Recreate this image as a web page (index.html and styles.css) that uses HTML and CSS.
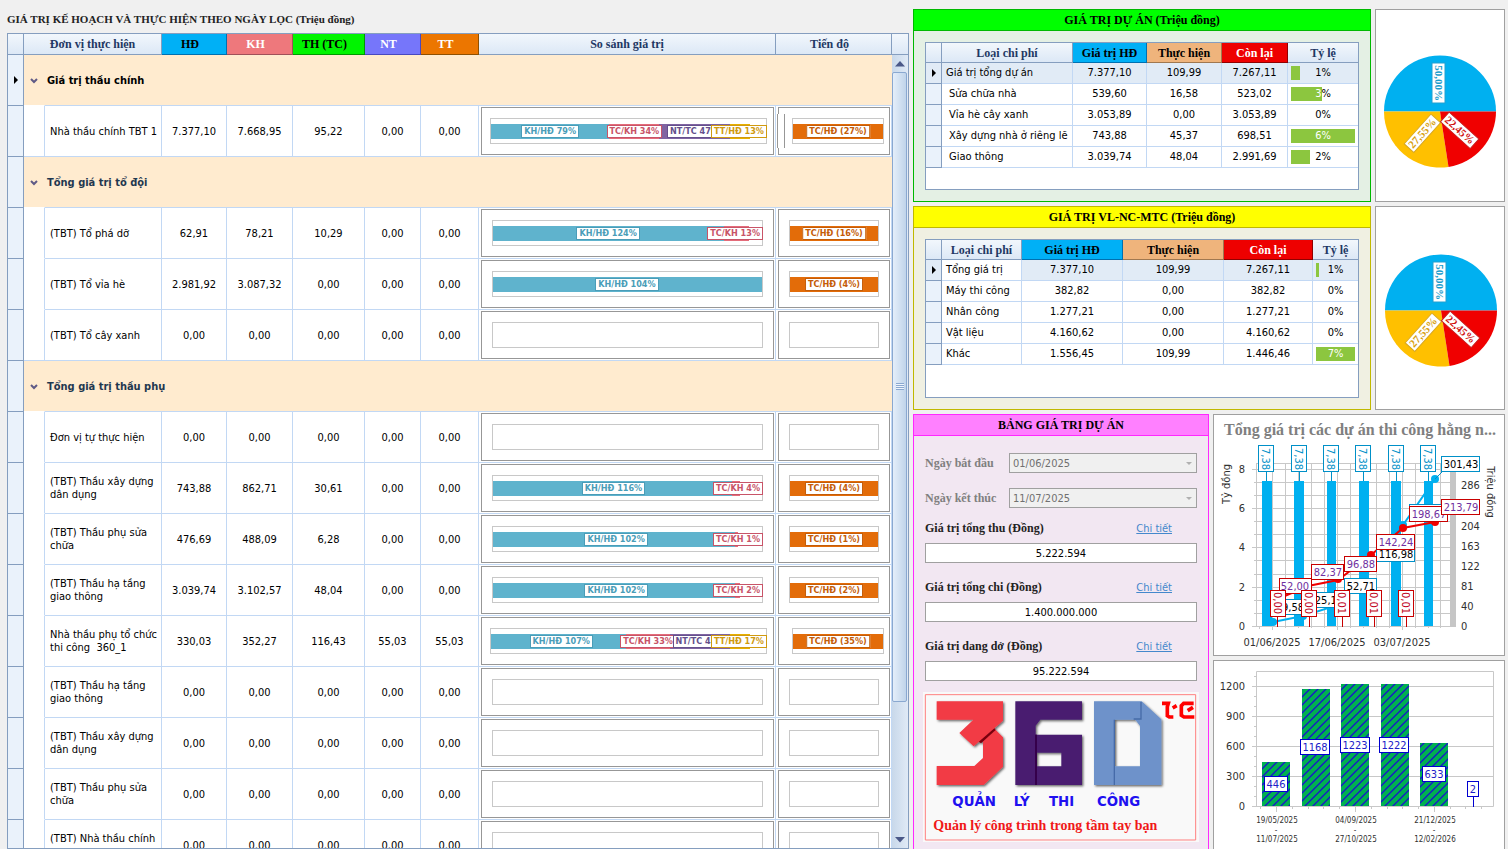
FILE: index.html
```
<!DOCTYPE html>
<html lang="vi">
<head>
  <meta charset="UTF-8">
  <meta name="viewport" content="width=device-width, initial-scale=1.0">
  <title>360 TC - Quản lý thi công</title>
  <link rel="stylesheet" href="styles.css">
</head>
<body>

  <div class="dashboard">

    <!-- Plan and actual values -->
    <section class="plan">
      <h1 class="plan-title">GIÁ TRỊ KẾ HOẠCH VÀ THỰC HIỆN THEO NGÀY LỌC (Triệu đồng)</h1>
      <div class="plan-grid">
        <div class="plan-scroll">
          <table class="plan-table">
            <colgroup>
              <col class="col-mark"><col class="col-indent"><col class="col-name"><col class="col-hd"><col class="col-kh"><col class="col-th"><col class="col-nt"><col class="col-tt"><col><col class="col-progress">
            </colgroup>
            <thead>
              <tr>
                <th></th>
                <th colspan="2">Đơn vị thực hiện</th>
                <th class="money blue">HĐ</th>
                <th class="money pink">KH</th>
                <th class="money green">TH (TC)</th>
                <th class="money violet">NT</th>
                <th class="money orange">TT</th>
                <th>So sánh giá trị</th>
                <th class="progress-head">Tiến độ</th>
              </tr>
            </thead>
            <tbody>
              <tr class="group current">
                <td class="mark"><span class="pointer"></span></td>
                <td colspan="9"><button type="button" class="toggle" aria-label="Thu gọn"><svg width="8" height="6" viewBox="0 0 8 6"><path d="M1 1l3 3 3-3"/></svg></button>Giá trị thầu chính</td>
              </tr>
              <tr class="wide seam">
                <td class="mark"></td><td class="indent"></td>
                <td class="name">Nhà thầu chính TBT 1</td>
                <td>7.377,10</td><td>7.668,95</td><td>95,22</td><td>0,00</td><td>0,00</td>
                <td class="chart"><div class="frame"><div class="track">
                  <span class="seg kh" style="width: 43%"></span><span class="seg tc" style="width: 18%"></span><span class="seg nt" style="width: 26%"></span><span class="seg tt" style="width: 7%"></span>
                  <span class="tag kh" style="left: 11%">KH/HĐ 79%</span><span class="tag tc" style="left: 42%">TC/KH 34%</span><span class="tag nt" style="left: 64%">NT/TC 47%</span><span class="tag tt end">TT/HĐ 13%</span>
                </div></div></td>
                <td class="chart"><div class="frame"><div class="track"><span class="seg done"></span><span class="tag done">TC/HĐ (27%)</span></div></div></td>
              </tr>
              <tr class="group">
                <td class="mark"></td>
                <td colspan="9"><button type="button" class="toggle" aria-label="Thu gọn"><svg width="8" height="6" viewBox="0 0 8 6"><path d="M1 1l3 3 3-3"/></svg></button>Tổng giá trị tổ đội</td>
              </tr>
              <tr>
                <td class="mark"></td><td class="indent"></td>
                <td class="name">(TBT) Tổ phá dỡ</td>
                <td>62,91</td><td>78,21</td><td>10,29</td><td>0,00</td><td>0,00</td>
                <td class="chart"><div class="frame"><div class="track">
                  <span class="seg kh" style="width: 86%"></span><span class="seg tc" style="width: 9%"></span>
                  <span class="tag kh" style="left: 31%">KH/HĐ 124%</span><span class="tag tc end">TC/KH 13%</span>
                </div></div></td>
                <td class="chart"><div class="frame"><div class="track"><span class="seg done"></span><span class="tag done">TC/HĐ (16%)</span></div></div></td>
              </tr>
              <tr>
                <td class="mark"></td><td class="indent"></td>
                <td class="name">(TBT) Tổ vỉa hè</td>
                <td>2.981,92</td><td>3.087,32</td><td>0,00</td><td>0,00</td><td>0,00</td>
                <td class="chart"><div class="frame"><div class="track">
                  <span class="seg kh" style="width: 100%"></span>
                  <span class="tag kh" style="left: 38%">KH/HĐ 104%</span>
                </div></div></td>
                <td class="chart"><div class="frame"><div class="track"><span class="seg done"></span><span class="tag done">TC/HĐ (4%)</span></div></div></td>
              </tr>
              <tr>
                <td class="mark"></td><td class="indent"></td>
                <td class="name">(TBT) Tổ cây xanh</td>
                <td>0,00</td><td>0,00</td><td>0,00</td><td>0,00</td><td>0,00</td>
                <td class="chart"><div class="frame"><div class="track"></div></div></td>
                <td class="chart"><div class="frame"><div class="track"></div></div></td>
              </tr>
              <tr class="group">
                <td class="mark"></td>
                <td colspan="9"><button type="button" class="toggle" aria-label="Thu gọn"><svg width="8" height="6" viewBox="0 0 8 6"><path d="M1 1l3 3 3-3"/></svg></button>Tổng giá trị thầu phụ</td>
              </tr>
              <tr>
                <td class="mark"></td><td class="indent"></td>
                <td class="name">Đơn vị tự thực hiện</td>
                <td>0,00</td><td>0,00</td><td>0,00</td><td>0,00</td><td>0,00</td>
                <td class="chart"><div class="frame"><div class="track"></div></div></td>
                <td class="chart"><div class="frame"><div class="track"></div></div></td>
              </tr>
              <tr>
                <td class="mark"></td><td class="indent"></td>
                <td class="name">(TBT) Thầu xây dựng<br>dân dụng</td>
                <td>743,88</td><td>862,71</td><td>30,61</td><td>0,00</td><td>0,00</td>
                <td class="chart"><div class="frame"><div class="track">
                  <span class="seg kh" style="width: 89%"></span><span class="seg tc" style="width: 3%"></span>
                  <span class="tag kh" style="left: 33%">KH/HĐ 116%</span><span class="tag tc end">TC/KH 4%</span>
                </div></div></td>
                <td class="chart"><div class="frame"><div class="track"><span class="seg done"></span><span class="tag done">TC/HĐ (4%)</span></div></div></td>
              </tr>
              <tr>
                <td class="mark"></td><td class="indent"></td>
                <td class="name">(TBT) Thầu phụ sửa<br>chữa</td>
                <td>476,69</td><td>488,09</td><td>6,28</td><td>0,00</td><td>0,00</td>
                <td class="chart"><div class="frame"><div class="track">
                  <span class="seg kh" style="width: 90%"></span><span class="seg tc" style="width: 1%"></span>
                  <span class="tag kh" style="left: 34%">KH/HĐ 102%</span><span class="tag tc end">TC/KH 1%</span>
                </div></div></td>
                <td class="chart"><div class="frame"><div class="track"><span class="seg done"></span><span class="tag done">TC/HĐ (1%)</span></div></div></td>
              </tr>
              <tr>
                <td class="mark"></td><td class="indent"></td>
                <td class="name">(TBT) Thầu hạ tầng<br>giao thông</td>
                <td>3.039,74</td><td>3.102,57</td><td>48,04</td><td>0,00</td><td>0,00</td>
                <td class="chart"><div class="frame"><div class="track">
                  <span class="seg kh" style="width: 90%"></span><span class="seg tc" style="width: 2%"></span>
                  <span class="tag kh" style="left: 34%">KH/HĐ 102%</span><span class="tag tc end">TC/KH 2%</span>
                </div></div></td>
                <td class="chart"><div class="frame"><div class="track"><span class="seg done"></span><span class="tag done">TC/HĐ (2%)</span></div></div></td>
              </tr>
              <tr class="wide">
                <td class="mark"></td><td class="indent"></td>
                <td class="name">Nhà thầu phụ tổ chức<br>thi công&nbsp; 360_1</td>
                <td>330,03</td><td>352,27</td><td>116,43</td><td>55,03</td><td>55,03</td>
                <td class="chart"><div class="frame"><div class="track">
                  <span class="seg kh" style="width: 49%"></span><span class="seg tc" style="width: 16%"></span><span class="seg nt" style="width: 22%"></span><span class="seg tt" style="width: 7%"></span>
                  <span class="tag kh" style="left: 14%">KH/HĐ 107%</span><span class="tag tc" style="left: 47%">TC/KH 33%</span><span class="tag nt" style="left: 66%">NT/TC 47%</span><span class="tag tt end">TT/HĐ 17%</span>
                </div></div></td>
                <td class="chart"><div class="frame"><div class="track"><span class="seg done"></span><span class="tag done">TC/HĐ (35%)</span></div></div></td>
              </tr>
              <tr>
                <td class="mark"></td><td class="indent"></td>
                <td class="name">(TBT) Thầu hạ tầng<br>giao thông</td>
                <td>0,00</td><td>0,00</td><td>0,00</td><td>0,00</td><td>0,00</td>
                <td class="chart"><div class="frame"><div class="track"></div></div></td>
                <td class="chart"><div class="frame"><div class="track"></div></div></td>
              </tr>
              <tr>
                <td class="mark"></td><td class="indent"></td>
                <td class="name">(TBT) Thầu xây dựng<br>dân dụng</td>
                <td>0,00</td><td>0,00</td><td>0,00</td><td>0,00</td><td>0,00</td>
                <td class="chart"><div class="frame"><div class="track"></div></div></td>
                <td class="chart"><div class="frame"><div class="track"></div></div></td>
              </tr>
              <tr>
                <td class="mark"></td><td class="indent"></td>
                <td class="name">(TBT) Thầu phụ sửa<br>chữa</td>
                <td>0,00</td><td>0,00</td><td>0,00</td><td>0,00</td><td>0,00</td>
                <td class="chart"><div class="frame"><div class="track"></div></div></td>
                <td class="chart"><div class="frame"><div class="track"></div></div></td>
              </tr>
              <tr>
                <td class="mark"></td><td class="indent"></td>
                <td class="name">(TBT) Nhà thầu chính<br>&nbsp;</td>
                <td>0,00</td><td>0,00</td><td>0,00</td><td>0,00</td><td>0,00</td>
                <td class="chart"><div class="frame"><div class="track"></div></div></td>
                <td class="chart"><div class="frame"><div class="track"></div></div></td>
              </tr>
            </tbody>
          </table>
        </div>
        <div class="scrollbar">
          <div class="scroll-head"></div>
          <button type="button" class="scroll-btn" aria-label="Cuộn lên"><svg width="10" height="6" viewBox="0 0 10 6"><path d="M0 5.500L5 0l5 5.500z"/></svg></button>
          <div class="scroll-track"><div class="thumb"><span class="grip"></span></div></div>
          <button type="button" class="scroll-btn" aria-label="Cuộn xuống"><svg width="10" height="6" viewBox="0 0 10 6"><path d="M0 0h10L5 5.500z"/></svg></button>
        </div>
      </div>
    </section>

    <div class="side">

      <!-- Project values -->
      <div class="side-row">
        <section class="panel panel-green">
          <h2>GIÁ TRỊ DỰ ÁN (Triệu đồng)</h2>
          <div class="panel-body">
            <div class="cost-box cost-project">
              <table class="cost-table">
                <colgroup><col class="col-mark"><col class="p-name"><col class="p-hd"><col class="p-th"><col class="p-cl"><col></colgroup>
                <thead>
                  <tr><th></th><th>Loại chi phí</th><th class="blue">Giá trị HĐ</th><th class="tan">Thực hiện</th><th class="red">Còn lại</th><th>Tỷ lệ</th></tr>
                </thead>
                <tbody>
                  <tr class="selected"><td class="mark"><span class="pointer"></span></td><td class="name">Giá trị tổng dự án</td><td>7.377,10</td><td>109,99</td><td>7.267,11</td><td class="rate"><div><i style="width: 14%"></i><span>1%</span></div></td></tr>
                  <tr><td class="mark"></td><td class="name child">Sửa chữa nhà</td><td>539,60</td><td>16,58</td><td>523,02</td><td class="rate"><div><i style="width: 49%"></i><span><b>3</b>%</span></div></td></tr>
                  <tr><td class="mark"></td><td class="name child">Vỉa hè cây xanh</td><td>3.053,89</td><td>0,00</td><td>3.053,89</td><td class="rate"><div><span>0%</span></div></td></tr>
                  <tr><td class="mark"></td><td class="name child">Xây dựng nhà ở riêng lẽ</td><td>743,88</td><td>45,37</td><td>698,51</td><td class="rate"><div><i style="width: 100%"></i><span><b>6%</b></span></div></td></tr>
                  <tr><td class="mark"></td><td class="name child">Giao thông</td><td>3.039,74</td><td>48,04</td><td>2.991,69</td><td class="rate"><div><i style="width: 30%"></i><span>2%</span></div></td></tr>
                </tbody>
              </table>
            </div>
          </div>
        </section>
        <div class="card pie">
          <svg viewBox="0 0 128 191">
            <path fill="#00b0f0" d="M8 101.500a56 56 0 0 1 112 0z"/>
            <path fill="#ffc000" d="M64 101.500H8a56 56 0 0 0 64.500 55.400z"/>
            <path fill="#f00000" d="M64 101.500h56a56 56 0 0 1-47.500 55.400z"/>
            <g transform="translate(63 73) rotate(90)"><rect class="b-blue" x="-20" y="-6" width="40" height="13"/><text class="t-blue" y="4">50,00%</text></g>
            <g transform="translate(46 123) rotate(-48)"><rect class="b-gold" x="-20" y="-6" width="40" height="13"/><text class="t-gold" y="4">27,55%</text></g>
            <g transform="translate(84 120) rotate(42)"><rect class="b-red" x="-20" y="-6" width="40" height="13"/><text class="t-red" y="4">22,45%</text></g>
          </svg>
        </div>
      </div>

      <!-- Material, labour and machine costs -->
      <div class="side-row">
        <section class="panel panel-yellow">
          <h2>GIÁ TRỊ VL-NC-MTC (Triệu đồng)</h2>
          <div class="panel-body">
            <div class="cost-box cost-type">
              <table class="cost-table">
                <colgroup><col class="col-mark"><col class="t-name"><col class="t-hd"><col class="t-th"><col class="t-cl"><col></colgroup>
                <thead>
                  <tr><th></th><th>Loại chi phí</th><th class="blue">Giá trị HĐ</th><th class="tan">Thực hiện</th><th class="red">Còn lại</th><th>Tỷ lệ</th></tr>
                </thead>
                <tbody>
                  <tr class="selected"><td class="mark"><span class="pointer"></span></td><td class="name focus">Tổng giá trị</td><td>7.377,10</td><td>109,99</td><td>7.267,11</td><td class="rate"><div><i style="width: 8%"></i><span>1%</span></div></td></tr>
                  <tr><td class="mark"></td><td class="name">Máy thi công</td><td>382,82</td><td>0,00</td><td>382,82</td><td class="rate"><div><span>0%</span></div></td></tr>
                  <tr><td class="mark"></td><td class="name">Nhân công</td><td>1.277,21</td><td>0,00</td><td>1.277,21</td><td class="rate"><div><span>0%</span></div></td></tr>
                  <tr><td class="mark"></td><td class="name">Vật liệu</td><td>4.160,62</td><td>0,00</td><td>4.160,62</td><td class="rate"><div><span>0%</span></div></td></tr>
                  <tr><td class="mark"></td><td class="name">Khác</td><td>1.556,45</td><td>109,99</td><td>1.446,46</td><td class="rate"><div><i style="width: 100%"></i><span><b>7%</b></span></div></td></tr>
                </tbody>
              </table>
            </div>
          </div>
        </section>
        <div class="card pie">
          <svg viewBox="0 0 128 202">
            <path fill="#00b0f0" d="M9 103.500a56 56 0 0 1 112 0z"/>
            <path fill="#ffc000" d="M65 103.500H9a56 56 0 0 0 64.500 55.400z"/>
            <path fill="#f00000" d="M65 103.500h56a56 56 0 0 1-47.500 55.400z"/>
            <g transform="translate(64 75) rotate(90)"><rect class="b-blue" x="-20" y="-6" width="40" height="13"/><text class="t-blue" y="4">50,00%</text></g>
            <g transform="translate(47 125) rotate(-48)"><rect class="b-gold" x="-20" y="-6" width="40" height="13"/><text class="t-gold" y="4">27,55%</text></g>
            <g transform="translate(85 122) rotate(42)"><rect class="b-red" x="-20" y="-6" width="40" height="13"/><text class="t-red" y="4">22,45%</text></g>
          </svg>
        </div>
      </div>

      <div class="side-row bottom">
        <!-- Project summary -->
        <section class="panel panel-pink">
          <h2>BẢNG GIÁ TRỊ DỰ ÁN</h2>
          <form class="summary">
            <div class="date-row">
              <label for="startDate">Ngày bắt đầu</label>
              <select id="startDate" disabled><option>01/06/2025</option></select>
            </div>
            <div class="date-row">
              <label for="endDate">Ngày kết thúc</label>
              <select id="endDate" disabled><option>11/07/2025</option></select>
            </div>
            <div class="total">
              <div class="total-head"><label for="income">Giá trị tổng thu (Đồng)</label><a href="#">Chi tiết</a></div>
              <input type="text" id="income" value="5.222.594" readonly>
            </div>
            <div class="total">
              <div class="total-head"><label for="expense">Giá trị tổng chi (Đồng)</label><a href="#">Chi tiết</a></div>
              <input type="text" id="expense" value="1.400.000.000" readonly>
            </div>
            <div class="total">
              <div class="total-head"><label for="pending">Giá trị dang dở (Đồng)</label><a href="#">Chi tiết</a></div>
              <input type="text" id="pending" value="95.222.594" readonly>
            </div>
          </form>
          <svg class="logo" viewBox="36 20 828 451" role="img" aria-label="360 TC">
            <defs>
              <filter id="shade" x="-5%" y="-5%" width="112%" height="112%"><feDropShadow dx="4" dy="4" stdDeviation="3" flood-color="#000" flood-opacity="0.600"/></filter>
            </defs>
            <path fill="#f9f9f9" d="M36 20h828v451H36z"/>
            <path fill="none" stroke="#ff8080" stroke-width="3" d="M43 28h811v436H43z"/>
            <g filter="url(#shade)">
              <path fill="#f23a45" d="M248 128l28 28v88l-58 55H77v-57h113l26-24v-48l-14-14z"/>
              <path fill="#7a0010" d="M202 168l46-42 6 8-44 40z"/>
              <path fill="#f23a45" d="M77 48h199v58l-88 77-43-40 42-40H77z"/>
            </g>
            <g filter="url(#shade)">
              <path fill="#481f70" fill-rule="evenodd" d="M313 48h200v55H388l-14 18v27h139v151H313zM374 202v41h77v-41z"/>
              <path fill="#35004c" d="M372 148h6v151h-6z"/>
            </g>
            <g filter="url(#shade)">
              <path fill="#6e92ca" fill-rule="evenodd" d="M549 48h143l59 54v197H549zM611 103v140h76V122l-14-19z"/>
              <path fill="#456ba8" d="M688 50h4v53h-24v-4h20zM608 103h4v196h-4z"/>
            </g>
            <path fill="none" stroke="#f00" stroke-width="11" d="M753 54h19l-3 10v27l6 4h12M785 68l12-7M848 54h-30l-7 7v29l8 5h31M830 76l16-10"/>
            <g class="logo-name"><text x="124" y="361">QUẢN</text><text x="308" y="361">LÝ</text><text x="414" y="361">THI</text><text x="558" y="361">CÔNG</text></g>
            <text class="logo-slogan" x="67" y="435">Quản lý công trình trong tầm tay bạn</text>
          </svg>
        </section>

        <div class="charts">
          <div class="card">
            <svg class="chart-svg" viewBox="6 5 290 240">
              <text class="chart-title" x="152" y="25">Tổng giá trị các dự án thi công hằng n...</text>
              <path class="grid" d="M44 59.500H242M48 53.500H242M46 72.500H242M46 85.500H242M44 98.500H242M46 111.500H242M46 124.500H242M44 137.500H242M46 150.500H242M46 164.500H242M44 177.500H242M46 190.500H242M46 203.500H242M44 216.500H242M48.500 53V217M51.500 216v3M64.500 53V220M77.500 53V218M90.500 53V218M103.500 53V218M116.500 53V218M129.500 53V220M142.500 53V218M155.500 53V218M168.500 53V218M181.500 53V218M194.500 53V220M207.500 53V218M220.500 53V218M232.500 53V218"/>
              <path fill="#c6c6c6" d="M242 57h6v160h-6z"/>
              <path fill="#00b0f0" d="M54 71h10v145H54zM86 71h10v145H86zM119 71h9v145h-9zM151 71h10v145h-10zM183 71h10v145h-10zM216 71h9v145h-9z"/>
              <path class="line" stroke="#00b0f0" d="M65 212L95 206L130 195L162 160L195 115L227 69"/>
              <g fill="#00b0f0"><circle cx="65" cy="212" r="4"/><circle cx="95" cy="206" r="4"/><circle cx="130" cy="195" r="4"/><circle cx="162" cy="158" r="4"/><circle cx="195" cy="115" r="4"/><circle cx="227" cy="69" r="4"/></g>
              <path class="line" stroke="#f00000" d="M72 188L100 176L130 170L163 145L195 118L227 112"/>
              <g fill="#f00000"><circle cx="130" cy="169" r="4"/><circle cx="163" cy="145" r="4"/><circle cx="195" cy="118" r="4"/><circle cx="227" cy="112" r="4"/></g>
              <path fill="none" stroke="#0090c8" d="M58.500 62v9M91.500 62v9M123.500 62v9M155.500 62v9M188.500 62v9M220.500 62v9M227 69l8-8"/>
              <g class="cyan">
                <rect x="50.500" y="35.500" width="15" height="26"/><rect x="83.500" y="35.500" width="15" height="26"/><rect x="115.500" y="35.500" width="15" height="26"/><rect x="147.500" y="35.500" width="15" height="26"/><rect x="180.500" y="35.500" width="15" height="26"/><rect x="212.500" y="35.500" width="15" height="26"/>
                <text transform="translate(54 49) rotate(90)">7,38</text><text transform="translate(87 49) rotate(90)">7,38</text><text transform="translate(119 49) rotate(90)">7,38</text><text transform="translate(151 49) rotate(90)">7,38</text><text transform="translate(184 49) rotate(90)">7,38</text><text transform="translate(216 49) rotate(90)">7,38</text>
              </g>
              <g class="dark">
                <rect x="74.500" y="189.500" width="22" height="15"/><text x="85" y="201">9,58</text>
                <rect x="105.500" y="182.500" width="31" height="15"/><text x="121" y="194">25,16</text>
                <rect x="136.500" y="168.500" width="32" height="15"/><text x="153" y="180">52,71</text>
                <rect x="168.500" y="136.500" width="38" height="15"/><text x="188" y="148">116,98</text>
                <rect x="201.500" y="94.500" width="38" height="15"/>
                <rect x="233.500" y="46.500" width="38" height="15"/><text x="253" y="58">301,43</text>
              </g>
              <g class="plum">
                <rect x="71.500" y="168.500" width="32" height="15"/><text x="87" y="180">52,00</text>
                <rect x="103.500" y="154.500" width="32" height="15"/><text x="120" y="166">82,37</text>
                <rect x="136.500" y="146.500" width="32" height="15"/><text x="153" y="158">96,88</text>
                <rect x="168.500" y="124.500" width="38" height="15"/><text x="188" y="136">142,24</text>
                <rect x="201.500" y="96.500" width="38" height="15"/><text x="221" y="108">198,67</text>
                <rect x="233.500" y="89.500" width="38" height="15"/><text x="253" y="101">213,79</text>
              </g>
              <path fill="none" stroke="#c80000" d="M69.500 207v10M101.500 207v10M134.500 207v10M166.500 207v10M198.500 207v10"/>
              <g class="crimson">
                <rect x="62.500" y="180.500" width="15" height="26"/><rect x="93.500" y="180.500" width="15" height="26"/><rect x="126.500" y="180.500" width="15" height="26"/><rect x="158.500" y="180.500" width="15" height="26"/><rect x="190.500" y="180.500" width="15" height="26"/>
                <text transform="translate(66 193) rotate(90)">0,00</text><text transform="translate(97 193) rotate(90)">0,00</text><text transform="translate(130 193) rotate(90)">0,01</text><text transform="translate(162 193) rotate(90)">0,01</text><text transform="translate(194 193) rotate(90)">0,01</text>
              </g>
              <g class="axis axis-left"><text x="37" y="63">8</text><text x="37" y="102">6</text><text x="37" y="141">4</text><text x="37" y="181">2</text><text x="37" y="220">0</text></g>
              <g class="axis axis-right"><text x="253" y="79">286</text><text x="253" y="120">204</text><text x="253" y="140">163</text><text x="253" y="160">122</text><text x="253" y="180">81</text><text x="253" y="200">40</text><text x="253" y="220">0</text></g>
              <g class="axis"><text x="64" y="236">01/06/2025</text><text x="129" y="236">17/06/2025</text><text x="194" y="236">03/07/2025</text></g>
              <g class="axis axis-name"><text transform="translate(22 74) rotate(-90)">Tỷ đồng</text><text transform="translate(279 82) rotate(90)">Triệu đồng</text></g>
            </svg>
          </div>
          <div class="card card-last">
            <svg class="chart-svg" viewBox="6 6 290 190">
              <defs>
                <pattern id="hatch" width="8" height="8" patternUnits="userSpaceOnUse"><path fill="#00b050" d="M0 0h8v8H0z"/><path stroke="#1818c8" stroke-width="1.400" d="M-1 9L9-1M-1 1l2-2M7 9l2-2"/></pattern>
              </defs>
              <path class="grid" d="M48.500 16.500H285.500V151.500H48.500zM44 31.500H285M44 61.500H285M44 91.500H285M44 121.500H285M44 151.500H49M46 21.500h3M46 41.500h3M46 51.500h3M46 71.500h3M46 81.500h3M46 101.500h3M46 111.500h3M46 131.500h3M46 141.500h3M52.500 151v3M68.500 151v6M84.500 151v3M100.500 151v3M115.500 151v3M131.500 151v3M147.500 151v6M163.500 151v3M179.500 151v3M194.500 151v3M210.500 151v3M226.500 151v6M242.500 151v3M257.500 151v3M273.500 151v3"/>
              <path fill="url(#hatch)" d="M54 107h28v44H54zM94 34h28v117H94zM133 29h28v122h-28zM173 29h28v122h-28zM212 88h28v63h-28z"/>
              <path stroke="#0000d0" d="M265.500 142v10"/>
              <g class="navy">
                <rect x="56.500" y="121.500" width="23" height="15"/><text x="68" y="133">446</text>
                <rect x="92.500" y="84.500" width="29" height="15"/><text x="107" y="96">1168</text>
                <rect x="132.500" y="82.500" width="29" height="15"/><text x="147" y="94">1223</text>
                <rect x="171.500" y="82.500" width="29" height="15"/><text x="186" y="94">1222</text>
                <rect x="214.500" y="111.500" width="23" height="15"/><text x="226" y="123">633</text>
                <rect x="259.500" y="126.500" width="11" height="15"/><text x="265" y="138">2</text>
              </g>
              <g class="axis axis-left"><text x="37" y="35">1200</text><text x="37" y="65">900</text><text x="37" y="95">600</text><text x="37" y="125">300</text><text x="37" y="155">0</text></g>
              <g class="axis axis-small">
                <text x="69" y="168">19/05/2025</text><text x="68" y="178">-</text><text x="69" y="187">11/07/2025</text>
                <text x="148" y="168">04/09/2025</text><text x="147" y="178">-</text><text x="148" y="187">27/10/2025</text>
                <text x="227" y="168">21/12/2025</text><text x="226" y="178">-</text><text x="227" y="187">12/02/2026</text>
              </g>
            </svg>
          </div>
        </div>
      </div>
    </div>
  </div>

</body>
</html>
```
FILE: styles.css
```
* {
  box-sizing: border-box;
}
body {
  margin: 0;
  background-color: #f0f0f0;
  font-family: "DejaVu Sans Condensed", "Noto Sans", sans-serif;
  font-size: 11px;
  color: #000;
}
h1, h2 {
  margin: 0;
  font-family: "Liberation Serif", serif;
  font-weight: bold;
}
button {
  border: none;
  padding: 0;
  background: none;
  cursor: pointer;
}
.dashboard {
  display: grid;
  grid-template-columns: 902fr 592fr;
  grid-template-rows: minmax(0, 1fr);
  gap: 4px;
  height: 100vh;
  padding: 9px 3px 0 7px;
  overflow: hidden;
}

/* main grid */
.plan {
  display: flex;
  flex-direction: column;
  min-width: 0;
  min-height: 0;
}
.plan-title {
  font-size: 11px;
  line-height: 20px;
  margin-bottom: 4px;
  color: #222;
}
.plan-grid {
  flex: 1;
  display: flex;
  min-height: 0;
  overflow: hidden;
  border: 1px solid #859ebf;
  background-color: #fff;
}
.plan-scroll {
  flex: 1;
  overflow: hidden;
}
table {
  width: 100%;
  table-layout: fixed;
  border-collapse: separate;
  border-spacing: 0;
}
th, td {
  padding: 0;
  text-align: center;
  overflow: hidden;
}
th {
  font-family: "Liberation Serif", serif;
  font-size: 12px;
  line-height: 18px;
  color: #1f3864;
  background: linear-gradient(#f2f7fc, #dce8f6);
  border-right: 1px solid #859ebf;
  border-bottom: 1px solid #859ebf;
  white-space: nowrap;
}
th.blue { background: #00b0f6; color: #000; border-color: #0070b0; }
th.pink { background: #ee787c; color: #fff; border-color: #a05058; }
th.green { background: #00f400; color: #000; border-color: #009800; }
th.violet { background: #7676fa; color: #fff; border-color: #4848c0; }
th.orange { background: #ec7600; color: #fff; border-color: #905000; }
th.tan { background: #efb47c; color: #000; border-color: #a07850; }
th.red { background: #ee0000; color: #fff; border-color: #900000; }
.plan-table th {
  height: 21px;
}
.plan-table th.money {
  padding-right: 8px;
}
.plan-table th.progress-head {
  padding-right: 8px;
}
.col-mark { width: 16px; }
.col-indent { width: 21px; }
.col-name { width: 117px; }
.col-hd { width: 65px; }
.col-kh { width: 66px; }
.col-th { width: 72px; }
.col-nt { width: 56px; }
.col-tt { width: 58px; }
.col-progress { width: 116px; }

.plan-table td {
  height: 51px;
  line-height: 13px;
  border-top: 1px solid #c2d8f4;
  border-right: 1px solid #c2d8f4;
}
.plan-table td.mark {
  background-color: #eaf2fb;
  border-color: #859ebf;
}
.plan-table td.indent {
  border-top-color: #fff;
}
.plan-table td.name {
  padding-left: 5px;
  text-align: left;
  white-space: nowrap;
}
.plan-table .group td {
  text-align: left;
  font-weight: bold;
  color: #1f3850;
}
.plan-table .group td + td {
  background-color: #ffebcf;
  border-right: none;
}
.plan-table .current td {
  height: 50px;
  border-top: none;
}
.plan-table .current td + td {
  color: #000;
}
.pointer {
  display: block;
  width: 0;
  margin: 0 auto;
  border: 4px solid transparent;
  border-left-color: #000;
  border-right: none;
}
.toggle {
  margin: 0 9px 0 6px;
  vertical-align: middle;
}
.toggle svg {
  display: block;
  fill: none;
  stroke: #5f5a86;
  stroke-width: 2;
}

/* comparison bars */
.plan-table td.chart {
  padding: 1px 1px 1px 2px;
  overflow: visible;
}
.frame {
  position: relative;
  display: flex;
  align-items: center;
  height: 48px;
  padding: 0 10px;
  border: 1px solid #979797;
}
.track {
  position: relative;
  flex: 1;
  display: flex;
  align-items: center;
  height: 26px;
  border: 1px solid #c8c8c8;
}
.wide .frame {
  padding: 0 6px 0 8px;
}
.wide td:last-child .frame {
  padding: 0 5px 0 13px;
}
/* double column edge of the first contractor row */
.seam td:last-child .frame::before {
  content: "";
  position: absolute;
  left: -2px;
  width: 6px;
  height: 34px;
  background-color: #fff;
  border: solid #979797;
  border-width: 0 1px;
}
.seg {
  height: 15px;
}
.seg.kh { background-color: #5fb3cd; }
.seg.tc { background-color: #e46c7a; }
.seg.nt { background-color: #8064a2; }
.seg.tt { background-color: #e8b000; }
.seg.done { width: 100%; background-color: #e36c09; }
.tag {
  position: absolute;
  height: 13px;
  padding: 0 2px;
  border: 1px solid;
  background-color: #fff;
  font-size: 9px;
  line-height: 11px;
  font-weight: bold;
  white-space: nowrap;
}
.tag.kh { color: #4a9db8; }
.tag.tc { color: #c85468; }
.tag.nt { color: #64508c; }
.tag.tt { color: #d09a10; }
.tag.end { right: -1px; }
.tag.done {
  left: 50%;
  transform: translateX(-50%);
  color: #c45c08;
}

/* scrollbar */
.scrollbar {
  display: flex;
  flex-direction: column;
  width: 16px;
  background: linear-gradient(to right, #c8d8ea, #e0eaf6);
}
.scroll-head {
  height: 21px;
  background: linear-gradient(#f2f7fc, #dce8f6);
  border-bottom: 1px solid #859ebf;
}
.scroll-btn {
  height: 17px;
}
.scroll-btn svg {
  display: block;
  margin: 0 auto;
  fill: #4a5888;
}
.scroll-track {
  flex: 1;
}
.thumb {
  display: flex;
  align-items: center;
  justify-content: center;
  height: 83%;
  margin-right: 1px;
  border: 1px solid #8aa8d0;
  border-radius: 2px;
  background: linear-gradient(to right, #e4eefa, #c0d4ea);
}
.grip {
  width: 8px;
  height: 7px;
  background: repeating-linear-gradient(#8aa8d0 0 1px, #eef4fc 1px 2px);
}

/* right side */
.side {
  display: flex;
  flex-direction: column;
  gap: 4px;
  min-width: 0;
}
.side-row {
  display: grid;
  flex-shrink: 0;
  grid-template-columns: 458fr 130fr;
  gap: 4px;
}
.side-row.bottom {
  grid-template-columns: 296fr 292fr;
}
.panel {
  min-width: 0;
  border: 1px solid;
}
.panel h2 {
  height: 21px;
  font-size: 12px;
  line-height: 20px;
  text-align: center;
  border-bottom: 1px solid;
  border-color: inherit;
}
.panel-green { border-color: #00b800; background-color: #e4f0e4; }
.panel-green h2 { background-color: #00ff00; }
.panel-yellow { border-color: #c0b800; background-color: #f0f0e2; }
.panel-yellow h2 { background-color: #ffff00; }
.panel-pink { border-color: #ff28ff; background-color: #f2e7f2; }
.panel-pink h2 { background-color: #ff80ff; }
.panel-body {
  padding: 11px;
}
.cost-box {
  border: 1px solid #859ebf;
  background-color: #fff;
}
.cost-project { height: 148px; }
.cost-type { height: 159px; }
.cost-table th {
  height: 20px;
}
.cost-table th:last-child {
  border-right: none;
}
.cost-table td {
  height: 21px;
  line-height: 18px;
  border-right: 1px solid #c2d8f4;
  border-bottom: 1px solid #c2d8f4;
}
.cost-table td:last-child {
  border-right: none;
}
.cost-table td.mark {
  background-color: #eaf2fb;
  border-color: #859ebf;
}
.cost-table td.name {
  padding-left: 4px;
  text-align: left;
  white-space: nowrap;
}
.cost-table td.child {
  padding-left: 7px;
}
.cost-table .selected td {
  background-color: #e1ebf6;
}
.cost-table .selected td.focus {
  background-color: #fff;
}
.p-name { width: 131px; }
.p-hd { width: 74px; }
.p-th { width: 75px; }
.p-cl { width: 66px; }
.t-name { width: 80px; }
.t-hd { width: 101px; }
.t-th { width: 101px; }
.t-cl { width: 89px; }
.rate div {
  position: relative;
  display: flex;
  height: 14px;
  margin: 0 3px;
}
.rate i {
  background-color: #8cc63f;
}
.rate span {
  position: absolute;
  width: 100%;
  line-height: 14px;
}
.rate b {
  color: #fff;
  font-weight: normal;
}
.card {
  min-width: 0;
  border: 1px solid #a0a0a0;
  background-color: #fff;
}
.card-last {
  flex: 1;
}
.card svg {
  display: block;
  width: 100%;
}
svg text {
  text-anchor: middle;
}
.pie text {
  font-family: "Liberation Serif", serif;
  font-size: 11px;
  font-weight: bold;
}
.pie rect { fill: #fff; }
.b-blue { stroke: #20a0d0; }
.b-gold { stroke: #d8a820; }
.b-red { stroke: #c82020; }
.t-blue { fill: #1a9ccc; }
.t-gold { fill: #d8a010; }
.t-red { fill: #d01010; }

/* summary form */
.summary {
  padding: 17px 11px 0;
}
.summary label {
  font-family: "Liberation Serif", serif;
  font-size: 12px;
  font-weight: bold;
  color: #222;
}
.date-row {
  display: grid;
  grid-template-columns: 84px 1fr;
  align-items: center;
  margin-bottom: 15px;
}
.date-row label {
  color: #808080;
}
.summary select, .summary input {
  display: block;
  width: 100%;
  height: 20px;
  padding: 0 3px;
  border: 1px solid #a0a0a0;
  border-radius: 0;
  font-family: inherit;
  font-size: 11px;
}
.summary select {
  appearance: none;
  opacity: 1;
  color: #707070;
  background: #f0f0f0 url("data:image/svg+xml,%3Csvg xmlns='http://www.w3.org/2000/svg' width='6' height='3'%3E%3Cpath fill='%23b0b0b0' d='M0 0h6L3 3z'/%3E%3C/svg%3E") no-repeat right 4px center;
}
.summary input {
  text-align: center;
  background-color: #fff;
}
.total {
  margin-bottom: 14px;
}
.total-head {
  display: flex;
  justify-content: space-between;
  align-items: center;
  height: 20px;
  margin-bottom: 5px;
  padding-right: 25px;
}
.total-head a {
  color: #4488cc;
}
.date-row + .total {
  margin-top: -5px;
}
.logo {
  display: block;
  width: calc(100% - 18px);
  margin: -3px 9px 0;
}
.logo text {
  text-anchor: start;
}
.logo-name {
  font-family: "DejaVu Sans", sans-serif;
  font-size: 40px;
  font-weight: bold;
  fill: #2010f0;
}
.logo-slogan {
  font-family: "Liberation Serif", serif;
  font-size: 42px;
  font-weight: bold;
  fill: #f01818;
}

/* charts */
.charts {
  display: flex;
  flex-direction: column;
  gap: 4px;
  min-width: 0;
}
.chart-svg {
  font-size: 11px;
}
.chart-title {
  font-family: "Liberation Serif", serif;
  font-size: 16px;
  font-weight: bold;
  fill: #7f7f7f;
}
.grid {
  fill: none;
  stroke: #c8c8c8;
}
.line {
  fill: none;
  stroke-width: 2;
}
.chart-svg rect { fill: #fff; }
.cyan rect, .dark rect { stroke: #0090c8; }
.cyan text { fill: #0090c8; }
.plum rect, .crimson rect { stroke: #c80000; }
.plum text { fill: #7030a0; }
.crimson text { fill: #c00020; }
.navy rect { stroke: #0000d0; }
.navy text { fill: #2020c8; }
.axis text { fill: #303030; }
.axis-left text { text-anchor: end; }
.axis-right text { text-anchor: start; }
.axis-small { font-size: 8px; }
```
